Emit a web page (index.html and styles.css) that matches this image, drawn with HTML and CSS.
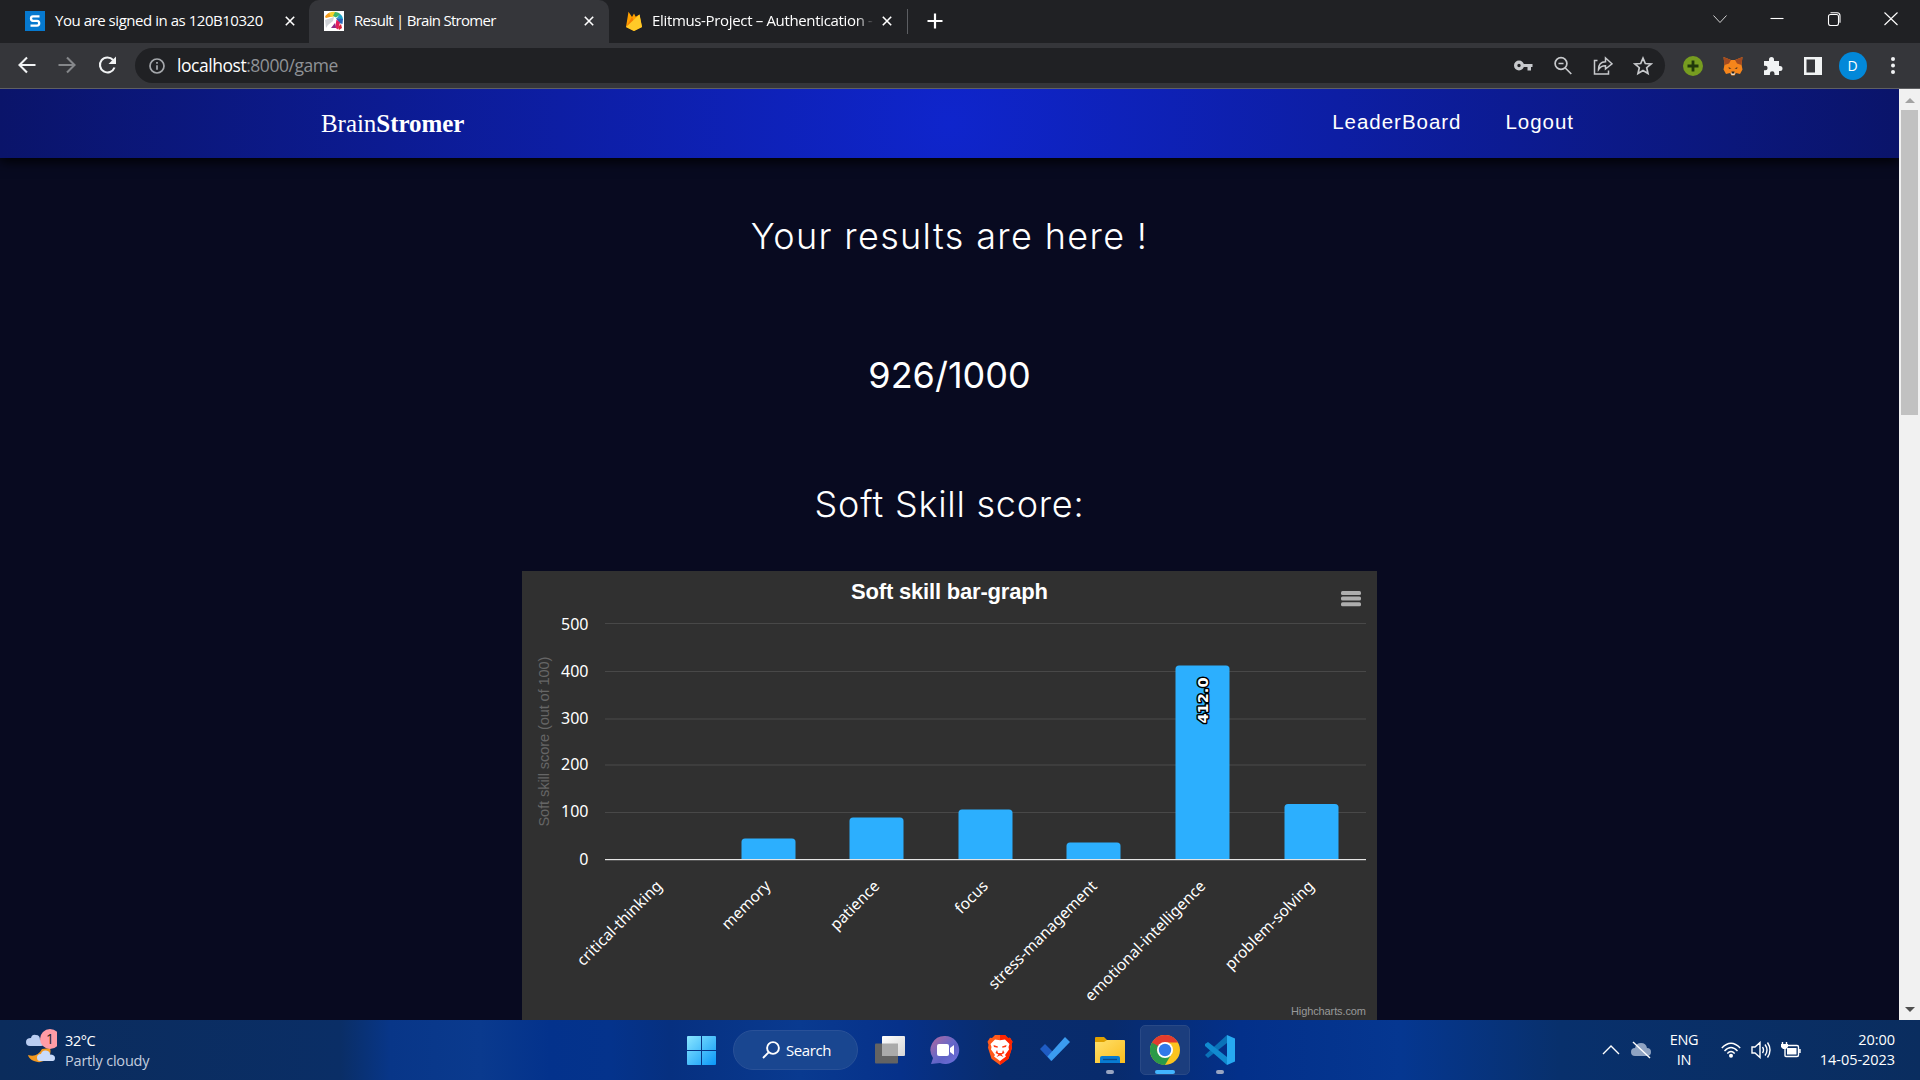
FILE: index.html
```html
<!DOCTYPE html>
<html lang="en">
<head>
<meta charset="utf-8">
<title>Result | Brain Stromer</title>
<link rel="stylesheet" href="styles.css">
</head>
<body>
<div class="screen">
  <header class="tabstrip">
    <div class="tab tab-first">
      <svg class="fav" viewBox="0 0 20 20"><rect width="20" height="20" fill="#0679cf"/><path d="M14.500 5.300H8q-2 0-2 2.200T8 9.800h4q2.200 0 2.200 2.400T12 14.600H5.500" fill="none" stroke="#fff" stroke-width="2.300"/></svg>
      <span class="tab-title t1">You are signed in as 120B10320</span>
      <svg class="x" viewBox="0 0 10 10"><path d="M.8.8l8.400 8.400M9.200.8L.8 9.200"/></svg>
    </div>
    <div class="tab tab-active">
      <svg class="fav" viewBox="0 0 20 20"><rect width="20" height="20" fill="#fff"/><path d="M1 6Q2 3 6 1.500L10 5 2 7z" fill="#f49b1c"/><path d="M5 2q4-2 7-1l-1 4-4 1z" fill="#f6d22a"/><path d="M11 1q4 0 5.500 2.500L12 6.500 9 5z" fill="#3fb56a"/><path d="M16 3q3 2 3 6l-6-2z" fill="#1da2c9"/><path d="M12 7l7 1-.5 5-3.500-1z" fill="#2864b7"/><path d="M12.500 8.500l3.500 3-2 7-3-2z" fill="#e31d5c"/><path d="M14 16l3-3 1 4-3 2z" fill="#d7243a"/><path d="M7 17l4-5 1 5z" fill="#8d2a86"/><path d="M1 9l9-3-1 4-5 4-2 3z" fill="#cfd2d6"/></svg>
      <span class="tab-title t2">Result | Brain Stromer</span>
      <svg class="x" viewBox="0 0 10 10"><path d="M.8.8l8.400 8.400M9.200.8L.8 9.200"/></svg>
    </div>
    <div class="tab tab-third">
      <svg class="fav" viewBox="0 0 20 20"><path d="M2 16L4.500.8 8 6l2-3.500 1.700 3.300L15.500 3.500 18 16l-8 4z" fill="#ffa000"/><path d="M2 16L8 6l2 4z" fill="#f57c00"/><path d="M2 16L15.500 3.500 18 16l-8 4z" fill="#ffca28"/></svg>
      <span class="tab-title t3">Elitmus-Project – Authentication -</span>
      <svg class="x" viewBox="0 0 10 10"><path d="M.8.8l8.400 8.400M9.200.8L.8 9.200"/></svg>
    </div>
    <svg class="plus" viewBox="0 0 16 16"><path d="M8 .5v15M.5 8h15"/></svg>
    <div class="window-controls">
      <svg viewBox="0 0 14 14"><path d="M.5 3.500L7 10.500 13.500 3.500" stroke-width=".8"/></svg>
      <svg viewBox="0 0 14 14"><path d="M.5 6.500h13"/></svg>
      <svg viewBox="0 0 14 14"><rect x="1.500" y="2.500" width="10" height="11" rx="2"/><path d="M3.500.800h6.500q3 0 3 3v7"/></svg>
      <svg viewBox="0 0 14 14"><path d="M.5.500l13 12.500M13.500.500L.5 13"/></svg>
    </div>
  </header>

  <div class="toolbar">
    <div class="nav-buttons">
      <svg viewBox="0 0 20 20"><path d="M18.500 10H3M10 2.500L2.500 10l7.500 7.500"/></svg>
      <svg class="dim" viewBox="0 0 20 20"><path d="M1.500 10H17M10 2.500l7.500 7.500-7.500 7.500"/></svg>
      <svg viewBox="0 0 20 20"><path d="M17.500 12.500A7.500 7.500 0 1 1 16.100 5"/><path d="M19 1.500V9h-7.500z" fill="#f1f3f4" stroke="none"/></svg>
    </div>
    <div class="omnibox">
      <svg class="info" viewBox="0 0 16 16"><circle cx="8" cy="8" r="7"/><path d="M8 7.200v4.500M8 4v1.700"/></svg>
      <span class="url"><b>localhost</b>:8000/game</span>
      <div class="omni-icons">
        <svg viewBox="0 0 20 20"><path fill="#c7c9cc" stroke="none" fill-rule="evenodd" d="M6 4.500a5 5 0 1 1 0 10 5 5 0 0 1 0-10zm0 3.300a1.700 1.700 0 1 0 0 3.400 1.700 1.700 0 0 0 0-3.400z"/><path fill="#c7c9cc" stroke="none" d="M9 8h10.500v3H18v3.500h-3.500V11H9z"/></svg>
        <svg viewBox="0 0 20 20"><circle cx="8" cy="7.500" r="5.900"/><path d="M12.300 12l6 6M5.500 7.500h5"/></svg>
        <svg viewBox="0 0 20 20"><path stroke-width="1.500" d="M4.500 4.500H1.500V18h14v-3.500M5.500 13.500q0-7.500 7-7.700V2L19 7.800 12.500 13V9.800q-4.500-.1-7 3.700z"/></svg>
        <svg viewBox="0 0 20 20"><path d="M10 2.200l2.300 5.300 5.700.5-4.300 3.700 1.300 5.700-5-3-5 3 1.300-5.700L2 8l5.700-.5z"/></svg>
      </div>
    </div>
    <div class="extensions">
      <svg viewBox="0 0 20 20"><circle cx="10" cy="10" r="10" fill="#769c20"/><path d="M10 4.500v11M4.500 10h11" stroke="#20380b" stroke-width="2.800"/></svg>
      <svg viewBox="0 0 20 20"><path d="M.5 1L8 4h4l7.500-3-1 7.500 1 5L17 18l-4-1-1.500 2.500h-3L7 17l-4 1-2.500-4.500 1-5z" fill="#f6851b"/><path d="M.5 1L8 4 6 7.500 1.500 9zM19.500 1L12 4l2 3.500L18.500 9z" fill="#a24a20"/><path d="M5.500 11l3 1.500-2.500.5zM14.500 11l-3 1.500 2.500.5z" fill="#5a3a24"/><path d="M8 16.500h4l-.5 2.500h-3z" fill="#e8ddd0"/><path d="M8.500 15.500h3l-.3 2H8.800z" fill="#222"/></svg>
      <svg viewBox="0 0 20 20"><path fill="#f1f3f4" d="M1 5h5V3.500a2.500 2.500 0 0 1 5 0V5h5v5h1a2.500 2.500 0 0 1 0 5h-1v4h-4.500v-1.500a2.300 2.300 0 0 0-4.600 0V19H1v-4.700h1.300a2.300 2.300 0 0 0 0-4.600H1z"/></svg>
      <svg viewBox="0 0 20 20"><path fill="#f1f3f4" fill-rule="evenodd" d="M1 1h18v18H1zM3.500 3.500v13H12v-13z"/></svg>
      <span class="avatar">D</span>
      <svg viewBox="0 0 20 20"><g fill="#f1f3f4"><circle cx="10" cy="3" r="2"/><circle cx="10" cy="9.500" r="2"/><circle cx="10" cy="16" r="2"/></g></svg>
    </div>
  </div>

  <div class="viewport">
    <main class="page">
      <nav class="navbar">
        <a class="brand"><span>Brain</span><strong>Stromer</strong></a>
        <div class="links"><a>LeaderBoard</a><a>Logout</a></div>
      </nav>
      <h1 class="heading results">Your results are here !</h1>
      <p class="score">926/1000</p>
      <h2 class="heading skill">Soft Skill score:</h2>
      <svg class="chart" viewBox="522 571 855 449" width="855" height="449">
        <rect x="522" y="571" width="855" height="449" fill="#303030"/>
        <text class="chart-title" x="949.500" y="599" textLength="197">Soft skill bar-graph</text>
        <g fill="#adadad"><rect x="1341" y="591" width="20" height="4" rx="1.500"/><rect x="1341" y="596.600" width="20" height="4" rx="1.500"/><rect x="1341" y="602.200" width="20" height="4" rx="1.500"/></g>
        <g stroke="#484848" stroke-width="1"><path d="M605 623.500h761M605 671.500h761M605 812.500h761"/><path d="M605 719h761M605 765h761" stroke="#3d3d3d" stroke-width="2"/></g>
        <g fill="#2caffe">
          <path d="M741.500 859v-17q0-3.500 3.500-3.500h47q3.500 0 3.500 3.500v17z"/>
          <path d="M849.500 859v-38q0-3.500 3.500-3.500h47q3.500 0 3.500 3.500v38z"/>
          <path d="M958.500 859v-46q0-3.500 3.500-3.500h47q3.500 0 3.500 3.500v46z"/>
          <path d="M1066.500 859v-13q0-3.500 3.500-3.500h47q3.500 0 3.500 3.500v13z"/>
          <path d="M1175.500 859V669q0-3.500 3.500-3.500h47q3.500 0 3.500 3.500v190z"/>
          <path d="M1284.500 859v-51.500q0-3.500 3.500-3.500h47q3.500 0 3.500 3.500V859z"/>
        </g>
        <path d="M605 859.500h761" stroke="#e4e4e4"/>
        <path d="M605 860.500h761" stroke="#555"/>
        <g class="ticks"><text x="588.500" y="630">500</text><text x="588.500" y="677">400</text><text x="588.500" y="724">300</text><text x="588.500" y="770">200</text><text x="588.500" y="817">100</text><text x="588.500" y="865">0</text></g>
        <text class="axis-title" transform="translate(549 826.500) rotate(-90)" textLength="170">Soft skill score (out of 100)</text>
        <g class="cats">
          <text transform="translate(663 887) rotate(-45)">critical-thinking</text>
          <text transform="translate(771.500 887) rotate(-45)">memory</text>
          <text transform="translate(880.500 887) rotate(-45)">patience</text>
          <text transform="translate(989 887) rotate(-45)">focus</text>
          <text transform="translate(1098 887) rotate(-45)">stress-management</text>
          <text transform="translate(1206.500 887) rotate(-45)">emotional-intelligence</text>
          <text transform="translate(1315 887) rotate(-45)">problem-solving</text>
        </g>
        <text class="bar-label" transform="translate(1208 723.500) rotate(-90)" textLength="46">412.0</text>
        <text class="credit" x="1366" y="1015" textLength="75">Highcharts.com</text>
      </svg>
    </main>
    <div class="scrollbar"><i class="up"></i><i class="thumb"></i><i class="down"></i></div>
  </div>

  <footer class="taskbar">
    <div class="weather">
      <svg viewBox="0 0 32 36" width="32" height="36"><path d="M3 27q9 3 14-6l8-1q2 6-3 11-6 5-13 2-5-2-6-6z" fill="#f2981f"/><path d="M5 18q-4 0-4-4t5-4q1-4 5-3 4 0 4 5 4 0 4 3t-3 3z" fill="#b9cdf2"/><path d="M15 33q-3 0-3-3.500t4-3.500q1-4 5-3.500t4 4q5 0 5 3.500t-3 3z" fill="#c9dbfa"/><circle cx="25" cy="11" r="10" fill="#ff9ca6"/><text x="25" y="16" class="badge">1</text></svg>
      <div class="weather-text"><span>32°C</span><span class="muted">Partly cloudy</span></div>
    </div>
    <div class="apps">
      <svg class="win" viewBox="0 0 29 29"><defs><linearGradient id="w" x1="0" y1="0" x2="29" y2="29" gradientUnits="userSpaceOnUse"><stop offset="0" stop-color="#8ae6ff"/><stop offset="1" stop-color="#0a98f8"/></linearGradient></defs><path fill="url(#w)" d="M1 0h13v14H0V1q0-1 1-1zM15 0h13q1 0 1 1v13H15zM0 15h14v14H1q-1 0-1-1zM15 15h14v13q0 1-1 1H15z"/></svg>
      <div class="search"><svg viewBox="0 0 18 18"><circle cx="11" cy="7" r="5.900"/><path d="M6.600 11.300L1 17"/></svg><span>Search</span></div>
      <svg class="app a-task" viewBox="0 0 30 30"><defs><linearGradient id="tv" x1="0" y1="0" x2="1" y2="1"><stop stop-color="#fff"/><stop offset="1" stop-color="#d5d5d5"/></linearGradient></defs><rect x="0" y="8.500" width="23" height="20" rx="1" fill="#636363"/><rect x="7" y="1" width="23" height="20" rx="1" fill="url(#tv)"/><path d="M7 8.500h16V21H7z" fill="#aaa"/></svg>
      <svg class="app a-teams" viewBox="0 0 30 30"><defs><linearGradient id="tm" x1="0" y1="0" x2="1" y2="1"><stop stop-color="#b4689b"/><stop offset=".5" stop-color="#6668c9"/><stop offset=".6" stop-color="#6062c4"/><stop offset="1" stop-color="#6f72df"/></linearGradient></defs><path d="M15 1a14 14 0 1 1-5 27L1 29l2-6A14 14 0 0 1 15 1z" fill="url(#tm)"/><rect x="7" y="9" width="12" height="12" rx="2" fill="#fff"/><path d="M20 13l4-3v10l-4-3z" fill="#fff"/></svg>
      <svg class="app a-brave" viewBox="0 0 30 30"><path d="M10 0h10l3 3 2-.2 2.500 4-1 3 .5 3-3.500 11L15 30l-8.500-6.200L3 12.800l.5-3-1-3 2.500-4L7 3z" fill="#ff5a1a"/><path d="M15 0h5l3 3 2-.2 2.500 4-1 3 .5 3-3.500 11L15 30z" fill="#ff2400"/><path fill="#fff" d="M10 4.500l5 .8 5-.8 4.500 4.500-1 3 .5 2.500-4 5.500 1 1.500-6 4.500-6-4.500 1-1.500-4-5.500.5-2.500-1-3z"/><path d="M8.500 10l4.500 1.500-.5 1.200L9 12zM21.500 10L17 11.500l.5 1.200L21 12zM12 15l-1.500 3 3 1.500-2 2.500 3.500-1.500 3.500 1.500-2-2.500 3-1.500L18 15l-1 3h-4z" fill="#ff3a12"/></svg>
      <svg class="app a-todo" viewBox="0 0 30 30"><path d="M0 14l5-5 10 10-4 7z" fill="#1f5cc4"/><path d="M7.500 21.500L25 2l5 5-18.500 19z" fill="#3b9cf0"/></svg>
      <div class="slot"><svg class="app" viewBox="0 0 30 30"><defs><linearGradient id="fx" x1="0" y1="0" x2="1" y2="1"><stop stop-color="#ffe06b"/><stop offset="1" stop-color="#fbbd1d"/></linearGradient></defs><path d="M0 3q0-1 1-1h8l4 4v3H0z" fill="#dfa000"/><path d="M0 7h9l3-2h17q1 0 1 1v22H0z" fill="url(#fx)"/><path d="M5 28v-5q0-2 2-2h16q2 0 2 2v5z" fill="#087bd2"/><path d="M8 24.500h14" stroke="#0a4a8c" stroke-width="1.300"/></svg><i class="dot"></i></div>
      <div class="slot current"><svg class="app" viewBox="0 0 30 30"><circle cx="15" cy="15" r="15" fill="#fbc41e"/><path d="M15 15L2 7.500A15 15 0 0 0 15 30l6.500-11z" fill="#2a9a48"/><path d="M2 7.500A15 15 0 0 1 28 7.500H15L8.500 18.800z" fill="#e33b2e"/><path d="M2 7.500L8.500 18.800 15 15z" fill="#2a9a48"/><circle cx="15" cy="15" r="8" fill="#fff"/><circle cx="15" cy="15" r="6.200" fill="#3079ea"/></svg><i class="dot wide"></i></div>
      <div class="slot"><svg class="app" viewBox="0 0 30 30"><path d="M0 20l22-20v8L3 23z" fill="#0a72b8"/><path d="M0 9l3-2 19 15v8L0 11z" fill="#118bd0"/><path d="M22 0l8 3.500v23L22 30z" fill="#27a9f1"/></svg><i class="dot"></i></div>
    </div>
    <div class="tray">
      <svg class="chev" viewBox="0 0 18 10"><path d="M1 9l8-8 8 8"/></svg>
      <svg class="cloud" viewBox="0 0 20 18"><path class="cloud-body" d="M4 15q-4 0-4-4t4-4q1-5 6-5t6 5q4 0 4 4t-4 4z"/><path d="M2 1l17 16"/></svg>
      <div class="lang"><span>ENG</span><span>IN</span></div>
      <svg class="wifi" viewBox="0 0 20 16"><path d="M.8 6Q10-3.500 19.200 6M3.500 9Q10 2 16.500 9M6.300 11.500q3.700-4 7.400 0"/><circle cx="10" cy="13.700" r="2" fill="#fff" stroke="none"/></svg>
      <svg class="vol" viewBox="0 0 20 18"><path d="M1 6h3l5-4.500v15L4 12H1zM11.500 6q2 3 0 6M14 3.500q4 5.500 0 11M16.500 1.500q5 7.500 0 15"/></svg>
      <svg class="bat" viewBox="0 0 20 18"><path d="M6.500 4.500H16q1.500 0 1.500 1.500v8q0 1.500-1.500 1.500H5q-1 0-1-1V8M19 8v4M1.500 1v3M5.500 1v3"/><path d="M0 3h7v3L5 8H2L0 6zM6 7h9.500v6.500H6z" fill="#fff" stroke="none"/></svg>
      <div class="clock"><span>20:00</span><span class="date">14-05-2023</span></div>
    </div>
  </footer>
</div>
</body>
</html>
```
FILE: styles.css
```css
* { box-sizing: border-box; }
body { margin: 0; font-family: "Open Sans", "Noto Sans", sans-serif; color: #fff; }
svg { display: block; flex: none; }
span { white-space: nowrap; }
.screen { width: 1920px; height: 1080px; display: flex; flex-direction: column; overflow: hidden; }

.tabstrip { height: 43px; flex: none; background: #202124; display: flex; }
.tab { height: 43px; display: flex; align-items: center; padding-bottom: 1px; }
.tab-first { width: 309px; padding-left: 25px; border-radius: 0 0 10px 0; }
.tab-active { width: 300px; padding-left: 15px; background: #35363a; border-radius: 10px 10px 0 0; }
.tab-third { width: 299px; padding-left: 15px; }
.tab-third::after { content: ""; margin-left: auto; width: 1px; height: 25px; background: #5c5e62; }
.fav { width: 20px; height: 20px; }
.tab-title { flex: none; margin-left: 10px; font-size: 15px; line-height: 20px; padding-bottom: 2px; }
.t1 { width: 224px; letter-spacing: -0.46px; }
.t2 { width: 224px; letter-spacing: -0.72px; }
.t3 { width: 227px; margin-left: 8px; letter-spacing: -0.34px; -webkit-mask-image: linear-gradient(90deg, #000 90%, transparent 98%); mask-image: linear-gradient(90deg, #000 90%, transparent 98%); }
.x { width: 10px; height: 10px; margin-left: 6px; }
.t3 + .x { margin-left: 3px; }
.x path { stroke: #fff; stroke-width: 1.6; }
.plus { width: 16px; height: 16px; margin: 13px 0 0 19px; }
.plus path { stroke: #fff; stroke-width: 2.2; }
.window-controls { margin-left: auto; padding: 12px 22px 0 0; display: flex; gap: 43px; }
.window-controls svg { width: 14px; height: 14px; fill: none; stroke: #fff; stroke-width: 1.1; }

.toolbar { height: 46px; flex: none; background: #35363a; border-bottom: 1px solid #5f6063; display: flex; align-items: center; }
.nav-buttons { width: 135px; padding: 0 0 1px 17px; display: flex; gap: 20px; }
.nav-buttons svg { width: 20px; height: 20px; fill: none; stroke: #f1f3f4; stroke-width: 2.1; }
.nav-buttons .dim { stroke: #85878a; }
.omnibox { width: 1530px; height: 35px; border-radius: 18px; background: #202124; display: flex; align-items: center; padding: 0 12px 0 14px; }
.info { width: 16px; height: 16px; fill: none; stroke: #a5a8ac; stroke-width: 1.7; }
.url { margin-left: 12px; padding-bottom: 1px; font-size: 17.500px; line-height: 24px; color: #8f9296; letter-spacing: -0.46px; }
.url b { font-weight: 400; color: #fff; }
.omni-icons { margin-left: auto; display: flex; gap: 20px; }
.omni-icons svg { width: 20px; height: 20px; fill: none; stroke: #c7c9cc; stroke-width: 1.7; }
.extensions { display: flex; align-items: center; gap: 20px; padding-left: 17.500px; }
.extensions svg { width: 20px; height: 20px; }
.avatar { width: 28px; height: 28px; margin: 0 -4px; border-radius: 50%; background: #0288d9; font-size: 14px; line-height: 28px; text-align: center; }

.viewport { height: 931px; flex: none; display: flex; }
.page { width: 1899px; height: 931px; background: #080a20; display: flex; flex-direction: column; align-items: center; overflow: hidden; }
.navbar { width: 1899px; height: 69px; flex: none; display: flex; justify-content: space-between; padding: 0 325px 0 321px; background: radial-gradient(circle, #0f25cc 0%, #0a146a 100%); box-shadow: 0 3px 12px #000; }
.brand { font-family: "Liberation Serif", serif; font-size: 25px; line-height: 34px; padding-top: 18px; letter-spacing: -0.05px; }
.links { display: flex; gap: 44px; padding-top: 20px; font-family: "Liberation Sans", Arial, sans-serif; font-size: 20.500px; line-height: 26px; letter-spacing: 0.97px; }
.heading, .score { margin: 0; flex: none; white-space: nowrap; font-family: Inter, sans-serif; font-weight: 350; height: 48px; line-height: 48px; font-size: 36px; }
.results { margin-top: 54px; letter-spacing: 1.35px; }
.score { margin-top: 91px; font-weight: 400; }
.skill { margin-top: 81px; letter-spacing: 0.75px; }
.chart { margin-top: 43px; }
.chart text { fill: #fff; font-family: "Noto Sans", sans-serif; }
.chart .chart-title { font: bold 22px "Liberation Sans", Arial, sans-serif; text-anchor: middle; }
.ticks text, .cats text { font-size: 16px; text-anchor: end; }
.cats text { font-size: 15.500px; }
.chart .axis-title { font: 14.600px "Liberation Sans", Arial, sans-serif; fill: #666; }
.chart .bar-label { font-family: "DejaVu Sans", sans-serif; font-size: 14.500px; font-weight: 700; stroke: #000; stroke-width: 3px; paint-order: stroke; stroke-linejoin: round; }
.chart .credit { font: 11px "Liberation Sans", Arial, sans-serif; fill: #999; text-anchor: end; }

.scrollbar { width: 21px; background: #f1f1f1; display: flex; flex-direction: column; align-items: center; }
.up { border: 5px solid transparent; border-top: 0; border-bottom: 5px solid #a3a3a3; margin: 9px 0 7px; }
.thumb { width: 17px; height: 305px; background: #c1c1c1; }
.down { margin: auto 0 8px; border: 5px solid transparent; border-bottom: 0; border-top: 5px solid #505050; }

.taskbar { height: 60px; flex: none; display: flex; background: linear-gradient(90deg, #0b2c5c 0, #0a2e66 340px, #083688 390px, #0a3a8e 480px, #03328c 550px, #04338c 610px, #063080 670px, #093a90 800px, #06318a 900px, #092c6c 1000px, #082b6c 1110px, #03308a 1240px, #053791 1400px, #08306c 1560px, #0a2d5f 1920px); }
.weather { width: 687px; display: flex; padding: 8px 0 0 25px; }
.weather-text { display: flex; flex-direction: column; padding-top: 3px; margin-left: 8px; font-size: 14.500px; line-height: 20px; letter-spacing: -0.2px; }
.weather-text span:first-child { letter-spacing: -0.4px; }
.muted { color: #c3cddf; }
.badge { font-size: 14px; text-anchor: middle; fill: #222; }
.apps { width: 558px; display: flex; align-items: center; }
.win { width: 29px; height: 29px; }
.search { width: 125px; height: 40px; margin-left: 17px; border-radius: 20px; border: 1px solid #295198; background: #194690; display: flex; align-items: center; padding-left: 28px; }
.search svg { width: 18px; height: 18px; fill: none; stroke: #fff; stroke-width: 1.9; }
.search span { margin-left: 6px; font-size: 15px; letter-spacing: -0.4px; }
.app { width: 30px; height: 30px; }
.a-task { margin-left: 17px; }
.a-teams { margin-left: 25px; }
.a-brave { margin-left: 25px; }
.a-todo { margin: 0 15px 0 25px; }
.slot { width: 50px; height: 50px; margin-left: 5px; padding-top: 10px; border-radius: 5px; display: flex; flex-direction: column; align-items: center; }
.a-todo + .slot { margin-left: 0; }
.current { background: #1b3d7d; border: 1px solid #294986; padding-top: 9px; }
.dot { width: 8px; height: 4px; margin-top: 5px; border-radius: 2px; background: #98a5c2; }
.wide { width: 20px; background: #42b5ff; }
.tray { flex: 1; display: flex; align-items: center; }
.tray svg { fill: none; stroke: #fff; stroke-width: 1.4; }
.chev { width: 18px; height: 10px; margin-left: 357px; }
.cloud { width: 20px; height: 18px; margin-left: 11px; }
.cloud .cloud-body { fill: #8fa3c2; stroke: none; }
.lang, .clock { display: flex; flex-direction: column; font-size: 14.500px; line-height: 20px; letter-spacing: -0.3px; }
.lang { width: 40px; margin-left: 13px; align-items: center; }
.wifi { width: 20px; height: 16px; margin-left: 17px; }
.vol { width: 20px; height: 18px; margin-left: 10px; }
.bat { width: 20px; height: 18px; margin-left: 10px; }
.clock { margin: 0 25px 0 auto; align-items: flex-end; letter-spacing: -0.05px; }
```
